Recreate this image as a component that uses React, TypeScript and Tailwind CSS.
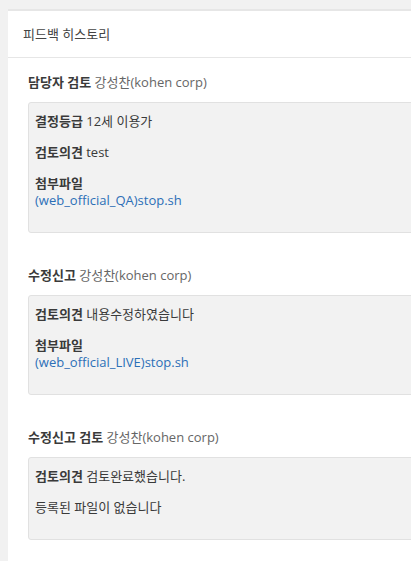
import React from "react";

const font = { fontFamily: '"Open Sans", "Noto Sans CJK KR", sans-serif' };

function Section({ label, name, children, first }: { label: string; name: string; children: React.ReactNode; first?: boolean }) {
  return (
    <div className={first ? "" : "mt-[34px]"}>
      <div className="text-[13px] leading-[17px] text-[#3a3a3a]">
        <span className="font-bold">{label}</span> <span className="text-[#666]">{name}</span>
      </div>
      <div className="mt-[11px] rounded-[3px] border border-[#e1e1e1] bg-[#f2f2f2] pl-[6px] pr-[10px] pt-[10px] pb-[10px] text-[13px] leading-[17px] text-[#3a3a3a]">
        {children}
      </div>
    </div>
  );
}

export default function App() {
  return (
    <div className="min-h-[561px] w-[411px] overflow-hidden bg-[#f1f1f1] pt-[9px] pl-[8px]" style={font}>
      <div className="w-[420px] min-h-[560px] border-t-2 border-[#e6e6e6] bg-white">
        <div className="border-b border-[#e6e6e6] pl-[15px] pt-[14px] pb-[14px] text-[13px] leading-[18px] text-[#444]">
          피드백 히스토리
        </div>
        <div className="pl-[20px] pt-[16px]">
          <Section label="담당자 검토" name="강성찬(kohen corp)" first>
            <p className="mb-[14px]"><span className="font-bold">결정등급</span> 12세 이용가</p>
            <p className="mb-[14px]"><span className="font-bold">검토의견</span> test</p>
            <p className="mb-[13px]"><span className="font-bold">첨부파일</span><br /><a className="text-[#2c6fb7]">(web_official_QA)stop.sh</a></p>
          </Section>
          <Section label="수정신고" name="강성찬(kohen corp)">
            <p className="mb-[14px]"><span className="font-bold">검토의견</span> 내용수정하였습니다</p>
            <p className="mb-[13px]"><span className="font-bold">첨부파일</span><br /><a className="text-[#2c6fb7]">(web_official_LIVE)stop.sh</a></p>
          </Section>
          <Section label="수정신고 검토" name="강성찬(kohen corp)">
            <p className="mb-[14px]"><span className="font-bold">검토의견</span> 검토완료했습니다.</p>
            <p className="mb-[13px]">등록된 파일이 없습니다</p>
          </Section>
        </div>
      </div>
    </div>
  );
}
